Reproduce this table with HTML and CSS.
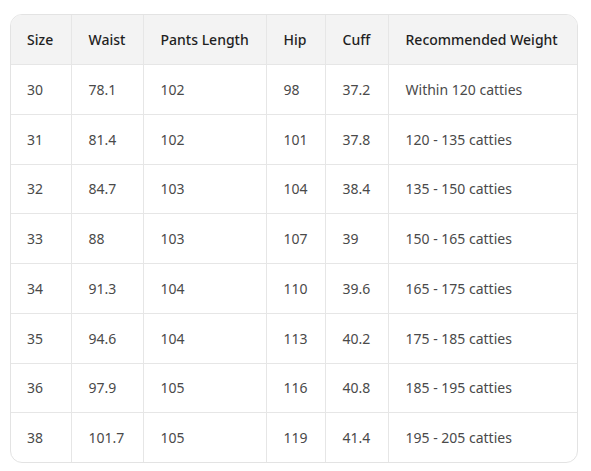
FILE: index.html
```html
<!DOCTYPE html>
<html>
<head>
<meta charset="utf-8">
<link rel="stylesheet" href="styles.css">
</head>
<body>
<div class="wrap">
<table class="sizes">
<colgroup>
<col class="c1"><col class="c2"><col class="c3"><col class="c4"><col class="c5"><col class="c6">
</colgroup>
<thead>
<tr><th>Size</th><th>Waist</th><th>Pants Length</th><th>Hip</th><th>Cuff</th><th>Recommended Weight</th></tr>
</thead>
<tbody>
<tr><td>30</td><td>78.1</td><td>102</td><td>98</td><td>37.2</td><td>Within 120 catties</td></tr>
<tr><td>31</td><td>81.4</td><td>102</td><td>101</td><td>37.8</td><td>120 - 135 catties</td></tr>
<tr><td>32</td><td>84.7</td><td>103</td><td>104</td><td>38.4</td><td>135 - 150 catties</td></tr>
<tr><td>33</td><td>88</td><td>103</td><td>107</td><td>39</td><td>150 - 165 catties</td></tr>
<tr><td>34</td><td>91.3</td><td>104</td><td>110</td><td>39.6</td><td>165 - 175 catties</td></tr>
<tr><td>35</td><td>94.6</td><td>104</td><td>113</td><td>40.2</td><td>175 - 185 catties</td></tr>
<tr><td>36</td><td>97.9</td><td>105</td><td>116</td><td>40.8</td><td>185 - 195 catties</td></tr>
<tr><td>38</td><td>101.7</td><td>105</td><td>119</td><td>41.4</td><td>195 - 205 catties</td></tr>
</tbody>
</table>
</div>
</body>
</html>
```
FILE: styles.css
```css
html, body {
  margin: 0;
  padding: 0;
  background: #ffffff;
}
body {
  padding: 14px 0 0 10px;
  font-family: "Noto Sans", "Open Sans", sans-serif;
  font-size: 14px;
  color: #404040;
}
.wrap {
  width: 566px;
  border: 1px solid #e3e3e3;
  border-radius: 12px;
  overflow: hidden;
}
.sizes {
  width: 100%;
  border-collapse: collapse;
  table-layout: fixed;
}
.c1 { width: 60px; }
.c2 { width: 72px; }
.c3 { width: 123px; }
.c4 { width: 59px; }
.c5 { width: 63px; }
.c6 { width: auto; }
.sizes th, .sizes td {
  text-align: left;
  padding: 0 0 0 17px;
  border-left: 1px solid #e6e6e6;
  border-top: 1px solid #e6e6e6;
  white-space: nowrap;
}
.sizes th:first-child, .sizes td:first-child {
  border-left: none;
  padding-left: 16px;
}
.sizes thead th {
  border-top: none;
  background: #f3f3f3;
  font-weight: 500;
  color: #1f1f1f;
  height: 49px;
}
.sizes td {
  height: 48.75px;
  color: #4a4a4a;
}
```
